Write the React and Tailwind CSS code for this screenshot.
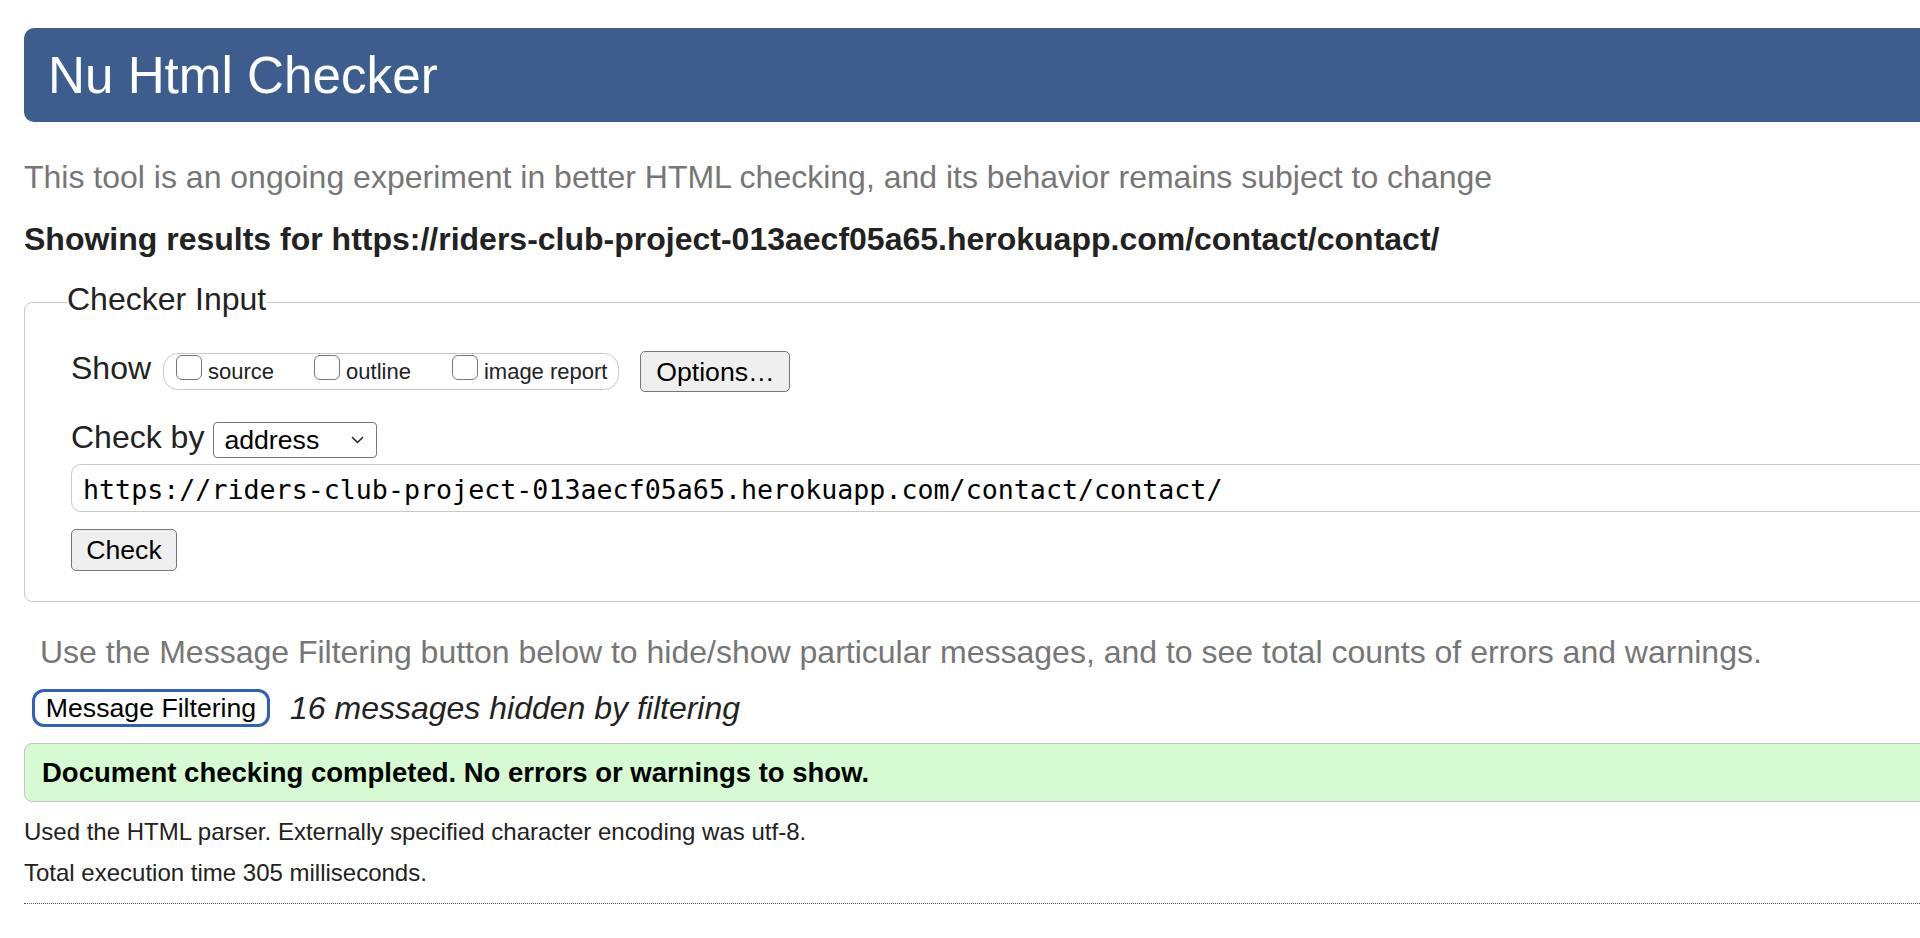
import React from 'react';

const URL = 'https://riders-club-project-013aecf05a65.herokuapp.com/contact/contact/';

// Mac-style checkbox (unchecked)
function Box() {
  return <span className="inline-block w-[26px] h-[25px] mb-[8px] rounded-[6px] border-[1.5px] border-[#767676] bg-white" />;
}

function Opt({ label, className }) {
  return (
    <label className={`flex items-center gap-[6px] ${className || ''}`}>
      <Box />
      <span className="text-[22px] leading-[28px] text-[#222]">{label}</span>
    </label>
  );
}

export default function App() {
  return (
    <div className="w-full h-[938px] overflow-hidden bg-white font-['Liberation_Sans',Arial,sans-serif]">
      <div className="w-[2300px] pl-[24px]">
        {/* Title bar */}
        <div className="mt-[28px] h-[94px] flex items-center pl-[24px] rounded-[10px] bg-[#3e5d8f]">
          <h1 className="text-[51.2px] leading-[59px] text-white">Nu Html Checker</h1>
        </div>

        <p className="mt-[35px] text-[32px] leading-[40px] text-[#767676]">
          This tool is an ongoing experiment in better HTML checking, and its behavior remains subject to change
        </p>
        <p className="mt-[22px] text-[32px] leading-[40px] font-bold text-[#222]">
          Showing results for {URL}
        </p>

        {/* Checker input */}
        <fieldset className="mt-[20px] pl-[42px] pt-[26px] pb-[30px] border border-[#c8c8c8] rounded-[8px]">
          <legend className="text-[32px] leading-[40px] pb-[6px] text-[#222]">Checker Input</legend>
          <div className="pl-[4px]">
            <div className="flex items-center h-[41px]">
              <span className="text-[32px] leading-[40px] text-[#222] mt-[-7px]">Show</span>
              <div className="ml-[12px] h-[37px] flex items-center pl-[12px] pr-[11px] border border-[#c8c8c8] rounded-[15px]">
                <Opt label="source" />
                <Opt label="outline" className="ml-[40px]" />
                <Opt label="image report" className="ml-[41px]" />
              </div>
              <button className="ml-[21px] w-[150px] h-[41px] bg-[#efefef] border-[1.5px] border-[#767676] rounded-[5px] text-[26.67px] leading-[30px] text-black">
                Options…
              </button>
            </div>

            <div className="mt-[30px] flex items-center h-[36px]">
              <span className="text-[32px] leading-[40px] text-[#222] mt-[-6px]">Check by</span>
              <div className="ml-[9px] w-[164px] h-[36px] flex items-center justify-between pl-[10px] pr-[12px] border border-[#767676] rounded-[4px] bg-white">
                <span className="text-[26.67px] leading-[30px] text-black">address</span>
                <svg width="13" height="8" viewBox="0 0 13 8" fill="none">
                  <path d="M1 1l5.5 5.5L12 1" stroke="#222" strokeWidth="1.5" />
                </svg>
              </div>
            </div>

            <div className="mt-[6px] h-[48px] w-[2150px] flex items-center pl-[11px] border border-[#c8c8c8] rounded-[10px]">
              <span className="mt-[4px] font-['DejaVu_Sans_Mono',monospace] text-[26.67px] leading-[32px] text-black">{URL}</span>
            </div>

            <button className="mt-[17px] w-[106px] h-[42px] bg-[#efefef] border-[1.5px] border-[#767676] rounded-[5px] text-[26.67px] leading-[30px] text-black">
              Check
            </button>
          </div>
        </fieldset>

        <p className="mt-[30px] pl-[16px] text-[32px] leading-[40px] text-[#767676]">
          Use the Message Filtering button below to hide/show particular messages, and to see total counts of errors and warnings.
        </p>

        <div className="mt-[17px] h-[38px] flex items-center">
          <button className="ml-[8px] w-[238px] h-[38px] bg-white border-[3px] border-[#2f5fbf] rounded-[12px] text-[26.67px] leading-[30px] text-black">
            Message Filtering
          </button>
          <span className="ml-[20px] text-[32px] leading-[40px] italic text-[#222]">16 messages hidden by filtering</span>
        </div>

        <div className="mt-[16px] h-[59px] flex items-center pl-[17px] bg-[#d6fbd2] border border-[#c2c8c0] rounded-[8px]">
          <span className="text-[27.5px] leading-[32px] font-bold text-black">
            Document checking completed. No errors or warnings to show.
          </span>
        </div>

        <p className="mt-[16px] text-[24px] leading-[28px] text-[#222]">
          Used the HTML parser. Externally specified character encoding was utf-8.
        </p>
        <p className="mt-[13px] text-[24px] leading-[28px] text-[#222]">Total execution time 305 milliseconds.</p>

        <div className="mt-[16px] border-t-[1.5px] border-dotted border-[#555]" />
      </div>
    </div>
  );
}
